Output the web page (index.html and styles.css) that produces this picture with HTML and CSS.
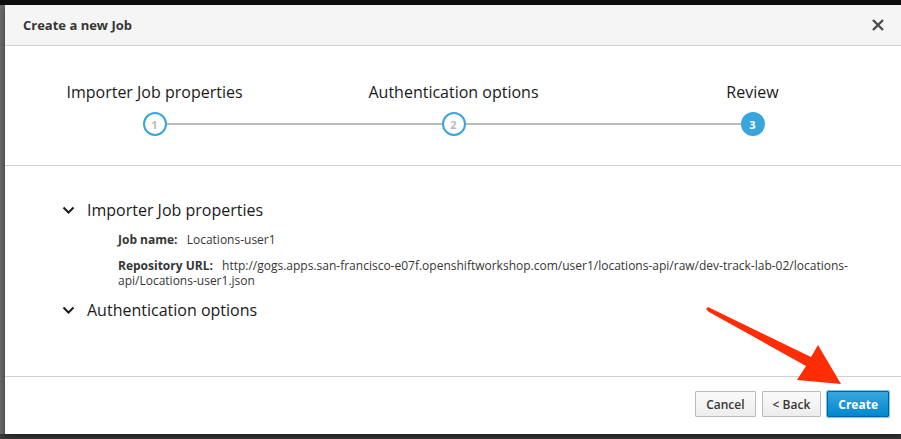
FILE: index.html
```html
<!DOCTYPE html>
<html>
<head>
<meta charset="utf-8">
<link rel="stylesheet" href="styles.css">
</head>
<body>
<div class="topband"></div>
<div class="stage">
  <div class="backdrop-strip"></div>
  <div class="modal">
    <div class="modal-header">
      <h4 class="modal-title">Create a new Job</h4>
      <button class="close" aria-label="Close">
        <svg width="14" height="14" viewBox="0 0 14 14"><path d="M2 2 L12 12 M12 2 L2 12" stroke="#4d4d4d" stroke-width="2.4" stroke-linecap="butt"/></svg>
      </button>
    </div>
    <div class="steps">
      <div class="step first">
        <div class="step-label">Importer Job properties</div>
        <div class="step-marker"><span class="circle">1</span></div>
      </div>
      <div class="step">
        <div class="step-label">Authentication options</div>
        <div class="step-marker"><span class="circle">2</span></div>
      </div>
      <div class="step last active">
        <div class="step-label">Review</div>
        <div class="step-marker"><span class="circle">3</span></div>
      </div>
    </div>
    <div class="review">
      <div class="section-title">
        <svg class="chev" width="13" height="9" viewBox="0 0 13 9"><path d="M1.5 1.5 L6.5 6.5 L11.5 1.5" fill="none" stroke="#1a1a1a" stroke-width="2"/></svg>
        <span>Importer Job properties</span>
      </div>
      <div class="detail"><b>Job name:</b> <span class="val">Locations-user1</span></div>
      <div class="detail"><b>Repository URL:</b> <span class="val">http://gogs.apps.san-francisco-e07f.openshiftworkshop.com/user1/locations-api/raw/dev-track-lab-02/locations-api/Locations-user1.json</span></div>
      <div class="section-title second">
        <svg class="chev" width="13" height="9" viewBox="0 0 13 9"><path d="M1.5 1.5 L6.5 6.5 L11.5 1.5" fill="none" stroke="#1a1a1a" stroke-width="2"/></svg>
        <span>Authentication options</span>
      </div>
    </div>
    <div class="modal-footer">
      <button class="btn">Cancel</button>
      <button class="btn">&lt; Back</button>
      <button class="btn primary">Create</button>
    </div>
    <svg class="arrow" width="150" height="90" viewBox="700 300 150 90">
      <polygon points="706,309 709,312 806,366 797,380 841,384 818,345 811,357 708,307" fill="#fe2d05"/>
    </svg>
  </div>
</div>
<div class="bottomband"></div>
</body>
</html>
```
FILE: styles.css
```css
html, body {
  margin: 0;
  padding: 0;
  width: 901px;
  height: 439px;
  overflow: hidden;
  background: #3b3b3b;
  font-family: "Open Sans", "Liberation Sans", sans-serif;
  color: #1a1a1a;
}
.topband {
  height: 5px;
  background: #0e0e0e;
}
.stage {
  display: flex;
  height: 429px;
  background: #6a6a6a;
}
.backdrop-strip {
  width: 5px;
  flex: none;
}
.modal {
  position: relative;
  flex: none;
  width: 897px;
  height: 429px;
  background: #fff;
  box-shadow: 0 3px 6px rgba(0,0,0,0.5);
  display: flex;
  flex-direction: column;
}
.modal-header {
  height: 41px;
  box-sizing: border-box;
  background: #f5f5f5;
  border-bottom: 1px solid #d1d1d1;
  display: flex;
  align-items: center;
  padding: 0 0 0 18px;
}
.modal-title {
  margin: 0;
  flex: 1;
  font-size: 13px;
  font-weight: 700;
  color: #363636;
}
.close {
  border: 0;
  background: transparent;
  padding: 0;
  margin-right: 17px;
  width: 14px;
  height: 14px;
  display: flex;
}
.steps {
  display: grid;
  grid-template-columns: 299px 299px 299px;
  height: 120px;
  box-sizing: border-box;
  border-bottom: 1px solid #d1d1d1;
  padding-top: 36px;
}
.step {
  display: flex;
  flex-direction: column;
  align-items: center;
}
.step-label {
  font-size: 16px;
  line-height: 20px;
  color: #1a1a1a;
}
.step-marker {
  position: relative;
  width: 100%;
  display: flex;
  justify-content: center;
  margin-top: 10px;
}
.step-marker::before, .step-marker::after {
  content: "";
  position: absolute;
  top: 11px;
  height: 2px;
  background: #bbb;
  width: 50%;
}
.step-marker::before { left: 0; }
.step-marker::after { right: 0; }
.first .step-marker::before { display: none; }
.last .step-marker::after { display: none; }
.circle {
  position: relative;
  z-index: 1;
  width: 24px;
  height: 24px;
  box-sizing: border-box;
  border: 2px solid #39a5dc;
  border-radius: 50%;
  background: #fff;
  color: #bbb;
  font-size: 11px;
  font-weight: 700;
  display: flex;
  align-items: center;
  justify-content: center;
}
.active .circle {
  background: #39a5dc;
  color: #fff;
}
.review {
  flex: 1;
  padding: 32px 26px 0 57px;
  border-bottom: 1px solid #d1d1d1;
}
.section-title {
  display: flex;
  align-items: center;
  height: 24px;
  font-size: 16px;
  color: #1a1a1a;
}
.section-title.second {
  margin-top: 10px;
}
.chev {
  margin-right: 12px;
}
.detail {
  margin: 10px 0 0 56px;
  font-size: 12px;
  line-height: 15px;
  color: #363636;
}
.detail + .detail {
  margin-top: 11px;
}
.detail b {
  font-weight: 700;
  margin-right: 6px;
}
.modal-footer {
  height: 57px;
  box-sizing: border-box;
  display: flex;
  justify-content: flex-end;
  align-items: flex-start;
  gap: 6px;
  padding: 14px 13px 0 0;
}
.btn {
  height: 26px;
  box-sizing: border-box;
  padding: 0 10px;
  font-family: "Open Sans", "Liberation Sans", sans-serif;
  font-size: 12px;
  font-weight: 600;
  color: #363636;
  background: linear-gradient(#fafafa, #ededed);
  border: 1px solid #bbb;
  border-radius: 1px;
  min-width: 59px;
}
.btn.primary {
  color: #fff;
  background: linear-gradient(#39a5dc, #0088ce);
  border-color: #00659c;
  box-shadow: 0 0 0 1px #7dc3e8;
  font-weight: 700;
  min-width: 60px;
}
.arrow {
  position: absolute;
  left: 695px;
  top: 295px;
}
.bottomband { height: 5px; background: #3b3b3b; }
```
